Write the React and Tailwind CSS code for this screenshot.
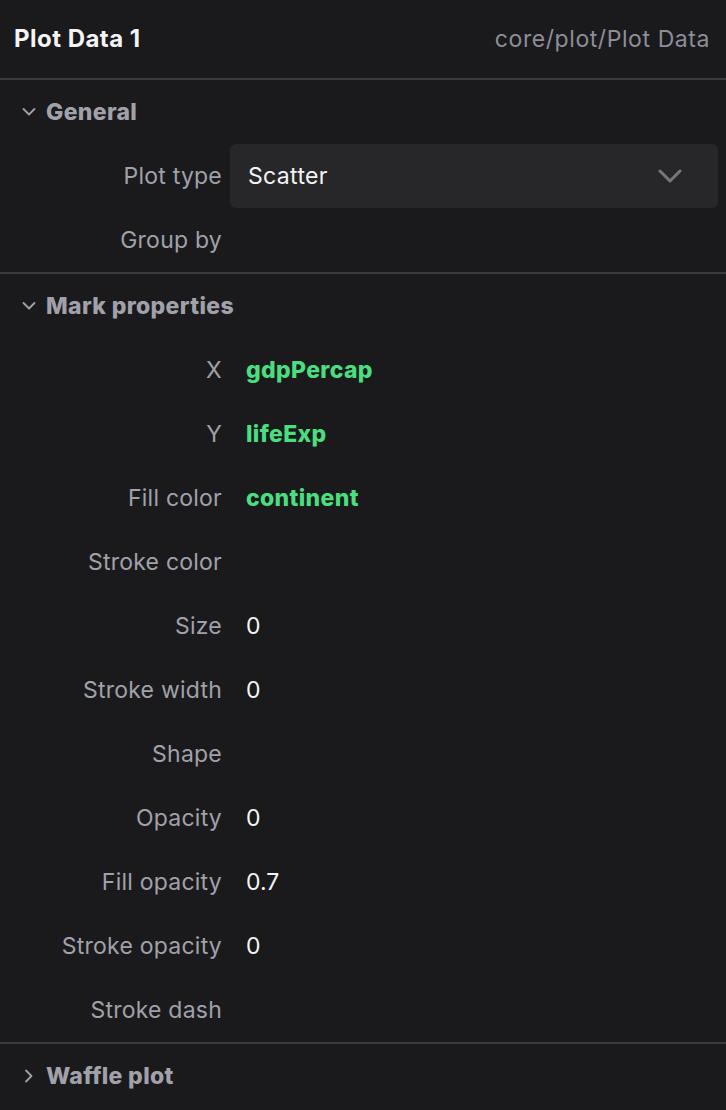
import React from 'react';

const rows = [
  { label: 'X', value: 'gdpPercap', field: true },
  { label: 'Y', value: 'lifeExp', field: true },
  { label: 'Fill color', value: 'continent', field: true },
  { label: 'Stroke color' },
  { label: 'Size', value: '0' },
  { label: 'Stroke width', value: '0' },
  { label: 'Shape' },
  { label: 'Opacity', value: '0' },
  { label: 'Fill opacity', value: '0.7' },
  { label: 'Stroke opacity', value: '0' },
  { label: 'Stroke dash' },
];

const Caret = ({ open }) => (
  <svg width="14" height="14" viewBox="0 0 14 14" fill="none" stroke="currentColor" strokeWidth="1.8" strokeLinecap="round" strokeLinejoin="round">
    {open ? <path d="M1.5 4 L7 9.5 L12.5 4" /> : <path d="M4 1.5 L9.5 7 L4 12.5" />}
  </svg>
);

const SectionHeader = ({ title, open }) => (
  <div className="flex items-center h-[64px] pl-[22px] gap-[10px] text-[#a1a1aa]">
    <Caret open={open} />
    <span className="text-[23px] font-extrabold tracking-[0.015em]">{title}</span>
  </div>
);

const Row = ({ label, children }) => (
  <div className="flex items-center h-[64px]">
    <div className="w-[222px] shrink-0 text-right text-[23px] tracking-[0.01em] text-[#a1a1aa]">{label}</div>
    <div className="flex-1 pl-[8px] pr-[8px]">{children}</div>
  </div>
);

export default function App() {
  return (
    <div
      className="w-[726px] h-[1110px] bg-[#1a1a1d] overflow-hidden"
      style={{ fontFamily: 'Inter, "Noto Sans", sans-serif' }}
    >
      <div className="flex items-center justify-between h-[80px] px-[14px] border-b-2 border-[#3a3a3f]">
        <span className="text-[24px] font-bold text-[#f4f4f5] tracking-[0.02em]">Plot Data 1</span>
        <span className="text-[23px] text-[#8e8e96] tracking-[0.025em] pr-[2px]">core/plot/Plot Data</span>
      </div>

      <div className="border-b-2 border-[#3a3a3f]">
        <SectionHeader title="General" open />
        <Row label="Plot type">
          <div className="flex items-center justify-between h-[64px] rounded-[6px] bg-[#27272a] pl-[18px] pr-[36px]">
            <span className="text-[23px] tracking-[0.015em] text-[#f4f4f5]">Scatter</span>
            <svg width="24" height="14" viewBox="0 0 24 14" fill="none" stroke="#76767e" strokeWidth="3" strokeLinecap="round" strokeLinejoin="round">
              <path d="M2 2 L12 12 L22 2" />
            </svg>
          </div>
        </Row>
        <Row label="Group by" />
      </div>

      <div className="border-b-2 border-[#3a3a3f]">
        <SectionHeader title="Mark properties" open />
        {rows.map((r) => (
          <Row key={r.label} label={r.label}>
            {r.value && (
              <span
                className={
                  r.field
                    ? 'pl-[16px] text-[23px] font-extrabold tracking-[0.015em] text-[#4ade80]'
                    : 'pl-[16px] text-[23px] text-[#f4f4f5]'
                }
              >
                {r.value}
              </span>
            )}
          </Row>
        ))}
      </div>

      <SectionHeader title="Waffle plot" />
    </div>
  );
}
